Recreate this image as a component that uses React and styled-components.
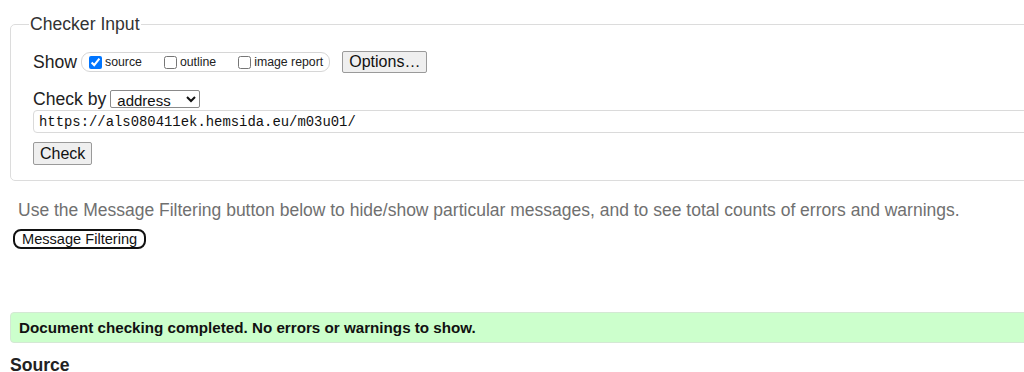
import React from "react";
import styled, { createGlobalStyle } from "styled-components";

const Global = createGlobalStyle`
  html, body { margin: 0; padding: 0; background: #fff; overflow: hidden; }
  body { font-family: "Liberation Sans", Arial, sans-serif; color: #222; }
`;

const Page = styled.div`
  width: 1100px;
  padding-top: 14px;
`;

const Fieldset = styled.fieldset`
  margin: 0 0 0 10px;
  padding: 0 0 15px 22px;
  border: 1px solid #dcdcdc;
  border-radius: 5px;
  min-width: 0;
`;

const Legend = styled.legend`
  font-size: 17.6px;
  line-height: 20px;
  color: #333;
  padding: 0 1px;
  margin-left: -4px;
`;

const Row = styled.div`
  display: flex;
  align-items: center;
  height: ${(p) => p.$h}px;
  margin-top: ${(p) => p.$mt}px;
`;

const Label = styled.span`
  font-size: 17.6px;
  color: #222;
  margin-right: 4px;
`;

const Group = styled.div`
  display: flex;
  align-items: center;
  gap: 22px;
  height: 18px;
  padding: 0 6px 0 7px;
  border: 1px solid #d6d6d6;
  border-radius: 9px;
  margin-right: 12px;
`;

const Opt = styled.label`
  display: flex;
  align-items: center;
  font-size: 12.3px;
  color: #222;
  gap: 2px;
`;

const Box = styled.input`
  width: 13px;
  height: 13px;
  margin: 0 1px 0 0;
`;

const Button = styled.button`
  font-family: "Liberation Sans", Arial, sans-serif;
  font-size: 16px;
  height: ${(p) => p.$h || 23}px;
  padding: 0 6px;
  background: #efefef;
  color: #111;
  border: 1px solid #9a9a9a;
  border-radius: 2px;
`;

const Select = styled.select`
  font-family: "Liberation Sans", Arial, sans-serif;
  font-size: 15px;
  width: 90px;
  height: 18px;
  padding: 0 0 0 2px;
  border: 1px solid #8a8a8a;
  border-radius: 2px;
  background: #fff;
  color: #111;
`;

const UrlInput = styled.div`
  margin-top: 2px;
  height: 21px;
  border: 1px solid #dadada;
  border-radius: 4px;
  padding-left: 5px;
  display: flex;
  align-items: center;
  font-family: "Liberation Mono", "DejaVu Sans Mono", monospace;
  font-size: 13.9px;
  color: #111;
`;

const CheckRow = styled.div`
  margin-top: 9px;
`;

const Note = styled.p`
  margin: 19px 0 0 18px;
  font-size: 17.5px;
  line-height: 20px;
  color: #707070;
`;

const FilterButton = styled.button`
  margin: 9px 0 0 13px;
  height: 20px;
  padding: 0 7px;
  font-family: "Liberation Sans", Arial, sans-serif;
  font-size: 14.6px;
  color: #111;
  background: #fff;
  border: 2px solid #111;
  border-radius: 8px;
  display: block;
`;

const Success = styled.div`
  margin: 63px 0 0 10px;
  height: 19px;
  padding: 5px 8px;
  background: #ccffcc;
  border: 1px solid #d4e8d4;
  border-radius: 4px;
  font-size: 15.2px;
  line-height: 19px;
  font-weight: bold;
  color: #111;
`;

const Heading = styled.h2`
  margin: 12px 0 0 10px;
  font-size: 17.6px;
  line-height: 20px;
  font-weight: bold;
  color: #222;
`;

export default function App() {
  return (
    <Page>
      <Global />
      <Fieldset>
        <Legend>Checker Input</Legend>
        <Row $h={22} $mt={17}>
          <Label>Show</Label>
          <Group>
            <Opt><Box type="checkbox" defaultChecked />source</Opt>
            <Opt><Box type="checkbox" />outline</Opt>
            <Opt><Box type="checkbox" />image report</Opt>
          </Group>
          <Button $h={22}>Options…</Button>
        </Row>
        <Row $h={18} $mt={17}>
          <Label>Check by</Label>
          <Select defaultValue="address">
            <option value="address">address</option>
            <option value="file">file upload</option>
            <option value="text">text input</option>
          </Select>
        </Row>
        <UrlInput>https://als080411ek.hemsida.eu/m03u01/</UrlInput>
        <CheckRow>
          <Button>Check</Button>
        </CheckRow>
      </Fieldset>
      <Note>
        Use the Message Filtering button below to hide/show particular messages, and to see total counts of errors and warnings.
      </Note>
      <FilterButton>Message Filtering</FilterButton>
      <Success>Document checking completed. No errors or warnings to show.</Success>
      <Heading>Source</Heading>
    </Page>
  );
}
